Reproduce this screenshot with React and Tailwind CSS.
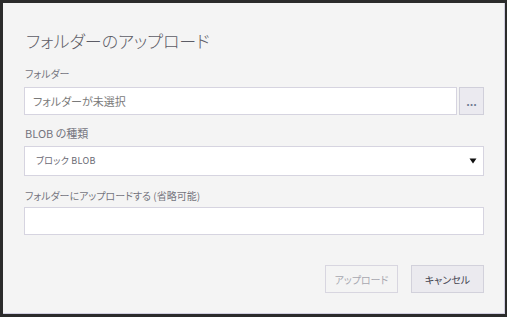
import React from "react";

const jp = "font-['Noto_Sans_CJK_JP','Noto_Sans',sans-serif] [font-feature-settings:'palt']";

function Field({ children }) {
  return (
    <div className="h-[28px] border border-[#d6d4e0] bg-white flex items-center">
      {children}
    </div>
  );
}

export default function App() {
  return (
    <div className={`w-[507px] h-[317px] bg-[#2b2b2b] pt-[3px] pl-[3px] pr-[2px] pb-[3px] ${jp}`}>
      <div className="h-full bg-[#f4f4f4] border-r border-b border-[#d0cee0] pl-[23px] pr-[20px] flex flex-col">
        <h1 className="mt-[26px] h-[24px] leading-[24px] text-[17px] font-light text-[#5c5c66]">
          フォルダーのアップロード
        </h1>

        <label className="-ml-[1px] mt-[13px] h-[16px] leading-[16px] text-[10px] text-[#74747e]">フォルダー</label>
        <div className="-ml-[2px] mt-[5px] flex gap-[2px]">
          <div className="flex-1">
            <Field>
              <span className="pl-[8px] text-[11px] text-[#7a7a7a]">フォルダーが未選択</span>
            </Field>
          </div>
          <button className="w-[25px] h-[28px] border border-[#d0cfda] bg-[#ebeaf0] flex items-center justify-center">
            <span className="text-[11px] leading-none text-[#6d7a92] font-bold">...</span>
          </button>
        </div>

        <label className="-ml-[1px] mt-[10px] h-[16px] leading-[16px] text-[11px] text-[#74747e]">BLOB の種類</label>
        <div className="-ml-[2px] mt-[5px] h-[30px] border border-[#d6d4e0] bg-white flex items-center justify-between pl-[11px] pr-[6px]">
          <span className="text-[9px] text-[#6a6a74] tracking-[0.3px]">ブロック BLOB</span>
          <svg width="8" height="6" viewBox="0 0 8 6">
            <path d="M0.5 0.5 H7.5 L4 5.5 Z" fill="#111" />
          </svg>
        </div>

        <label className="-ml-[1px] mt-[12px] h-[16px] leading-[16px] text-[10px] text-[#74747e]">
          フォルダーにアップロードする (省略可能)
        </label>
        <div className="-ml-[2px] mt-[3px]">
          <Field />
        </div>

        <div className="mt-[30px] flex justify-end gap-[13px]">
          <button className="w-[73px] h-[28px] border border-[#d8d6e0] bg-transparent text-[10px] text-[#a8a8b0]">
            アップロード
          </button>
          <button className="w-[73px] h-[28px] border border-[#d2d1db] bg-[#ebeaef] text-[10px] text-[#444450]">
            キャンセル
          </button>
        </div>
      </div>
    </div>
  );
}
